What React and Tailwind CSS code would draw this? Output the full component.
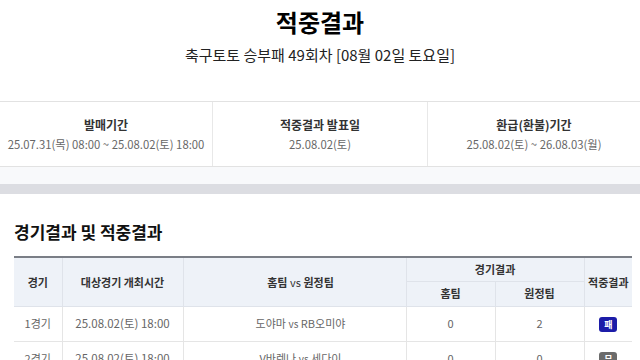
import React from "react";

const info = [
  { label: "발매기간", value: "25.07.31(목) 08:00 ~ 25.08.02(토) 18:00" },
  { label: "적중결과 발표일", value: "25.08.02(토)" },
  { label: "환급(환불)기간", value: "25.08.02(토) ~ 26.08.03(월)" },
];

const games = [
  { no: "1경기", time: "25.08.02(토) 18:00", home: "도야마", away: "RB오미야", hs: 0, as: 2, result: "패", tone: "bg-[#1c1ca8]" },
  { no: "2경기", time: "25.08.02(토) 18:00", home: "V바렌나", away: "세다이", hs: 0, as: 0, result: "무", tone: "bg-[#6b6b6b]" },
];

export default function App() {
  return (
    <div className="w-[640px] h-[360px] overflow-hidden bg-white text-[#222] font-['Noto_Sans_CJK_KR','Noto_Sans',sans-serif]">
      {/* Title */}
      <div className="flex flex-col items-center pt-[5px]">
        <h1 className="text-[24px] leading-[34px] font-bold text-black">적중결과</h1>
        <p className="mt-[4px] text-[15px] leading-[24px] text-[#222]">
          축구토토 승부패 49회차 [08월 02일 토요일]
        </p>
      </div>

      {/* Info box */}
      <div className="mt-[34px] border-t border-b border-[#e2e2e2] grid grid-cols-[213px_215px_1fr] h-[66px]">
        {info.map((it, i) => (
          <div
            key={i}
            className={`flex flex-col items-center justify-center gap-[3px] ${i < 2 ? "border-r border-[#e8e8e8]" : ""}`}
          >
            <span className="text-[12px] leading-[16px] font-bold text-[#333]">{it.label}</span>
            <span className="text-[11.3px] leading-[16px] text-[#666]">{it.value}</span>
          </div>
        ))}
      </div>
      <div className="h-[17px] bg-[#f8f9fb]" />
      <div className="h-[10px] bg-[#dcdde2]" />

      {/* Section */}
      <div className="px-[14px] pr-[8px]">
        <h2 className="mt-[26px] text-[17px] leading-[24px] font-bold text-[#111]">경기결과 및 적중결과</h2>

        <table className="mt-[12px] w-[618px] border-collapse border-t-2 border-t-[#7a7e86] text-[11px] table-fixed">
          <colgroup>
            <col className="w-[48px]" />
            <col className="w-[121px]" />
            <col className="w-[223px]" />
            <col className="w-[89px]" />
            <col className="w-[89px]" />
            <col className="w-[48px]" />
          </colgroup>
          <thead className="bg-[#eef2f8] text-[#333] font-bold">
            <tr className="h-[24px]">
              <th rowSpan={2} className="border-r border-b border-[#dfe3ea] font-bold">경기</th>
              <th rowSpan={2} className="border-r border-b border-[#dfe3ea] font-bold">대상경기 개최시간</th>
              <th rowSpan={2} className="border-r border-b border-[#dfe3ea] font-bold pl-[12px]">
                홈팀 <span className="font-normal">vs</span> 원정팀
              </th>
              <th colSpan={2} className="border-r border-b border-[#dfe3ea] font-bold">경기결과</th>
              <th rowSpan={2} className="border-b border-[#dfe3ea] font-bold">적중결과</th>
            </tr>
            <tr className="h-[25px]">
              <th className="border-r border-b border-[#dfe3ea] font-bold">홈팀</th>
              <th className="border-r border-b border-[#dfe3ea] font-bold">원정팀</th>
            </tr>
          </thead>
          <tbody className="text-[#666] text-center">
            {games.map((g) => (
              <tr key={g.no} className="h-[35px]">
                <td className="border-r border-b border-[#e5e5e5]">{g.no}</td>
                <td className="border-r border-b border-[#e5e5e5] text-[11.5px]">{g.time}</td>
                <td className="border-r border-b border-[#e5e5e5] pl-[12px]">
                  {g.home} <span className="text-[10px]">vs</span> {g.away}
                </td>
                <td className="border-r border-b border-[#e5e5e5]">{g.hs}</td>
                <td className="border-r border-b border-[#e5e5e5]">{g.as}</td>
                <td className="border-b border-[#e5e5e5]">
                  <span className={`inline-flex items-center justify-center w-[18px] h-[15px] rounded-[3px] text-[9px] font-bold text-white ${g.tone}`}>
                    {g.result}
                  </span>
                </td>
              </tr>
            ))}
          </tbody>
        </table>
      </div>
    </div>
  );
}
